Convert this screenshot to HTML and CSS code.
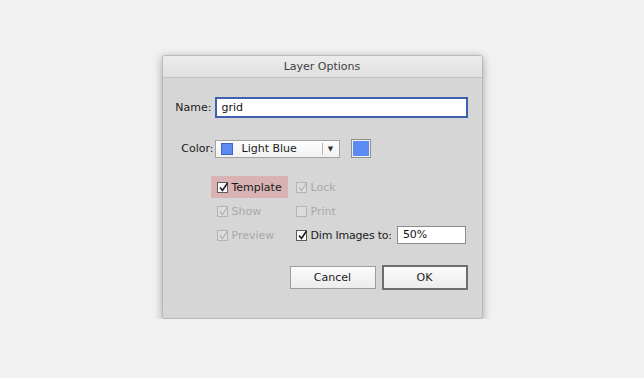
FILE: index.html
```html
<!DOCTYPE html>
<html lang="en">
<head>
    <meta charset="UTF-8">
    <title>Layer Options</title>
    <link rel="stylesheet" href="styles.css">
</head>
<body>
    <div class="dialog">
        <div class="titlebar">Layer Options</div>
        <div class="content">
            <div class="field">
                <span class="label">Name:</span>
                <div class="text-input name-input">grid</div>
            </div>

            <div class="field color-row">
                <span class="label">Color:</span>
                <div class="select">
                    <span class="chip"></span>
                    <span class="select-text">Light Blue</span>
                    <span class="select-arrow">&#9660;</span>
                </div>
                <span class="swatch-btn"><span class="swatch"></span></span>
            </div>

            <div class="options">
                <div class="opt">
                    <span class="opt-inner highlight"><span class="box"><svg viewBox="0 0 11 11"><path d="M2 5.5 L4.5 8.5 L9.5 1"/></svg></span>Template</span>
                </div>
                <div class="opt disabled">
                    <span class="opt-inner"><span class="box"><svg viewBox="0 0 11 11"><path d="M2 5.5 L4.5 8.5 L9.5 1"/></svg></span>Lock</span>
                </div>
                <div class="opt disabled">
                    <span class="opt-inner"><span class="box"><svg viewBox="0 0 11 11"><path d="M2 5.5 L4.5 8.5 L9.5 1"/></svg></span>Show</span>
                </div>
                <div class="opt disabled">
                    <span class="opt-inner"><span class="box"></span>Print</span>
                </div>
                <div class="opt disabled">
                    <span class="opt-inner"><span class="box"><svg viewBox="0 0 11 11"><path d="M2 5.5 L4.5 8.5 L9.5 1"/></svg></span>Preview</span>
                </div>
                <div class="opt">
                    <span class="opt-inner dim-label"><span class="box"><svg viewBox="0 0 11 11"><path d="M2 5.5 L4.5 8.5 L9.5 1"/></svg></span>Dim Images to:</span>
                    <div class="text-input dim-input">50%</div>
                </div>
            </div>

            <div class="buttons">
                <div class="btn">Cancel</div>
                <div class="btn btn-default">OK</div>
            </div>
        </div>
    </div>
</body>
</html>
```

FILE: styles.css
```css
body {
    margin: 0;
    padding: 0;
    background: #f1f1f1;
    font-family: 'DejaVu Sans', sans-serif;
    font-size: 11px;
    color: #1a1a1a;
}

.dialog {
    width: 321px;
    height: 264px;
    margin: 55px auto 0;
    background: #d6d6d6;
    border: 1px solid #bababa;
    box-sizing: border-box;
    border-radius: 3px;
    box-shadow: 0 2px 9px rgba(0, 0, 0, 0.32);
    overflow: hidden;
}

.titlebar {
    height: 21px;
    line-height: 21px;
    text-align: center;
    color: #3f3f3f;
    background: linear-gradient(#ececec, #e0e0e0);
    border-bottom: 1px solid #c2c2c2;
}

.content {
    padding: 19px 14px 0 0;
}

.field {
    display: flex;
    align-items: center;
    height: 21px;
}

.label {
    width: 49px;
    text-align: right;
    margin-right: 3px;
}

.text-input {
    background: #fff;
    border: 1px solid #9a9a9a;
    box-sizing: border-box;
    padding-left: 5px;
    color: #111;
}

.name-input {
    width: 253px;
    height: 21px;
    line-height: 17px;
    border: 2px solid #3d5fae;
}

.color-row {
    margin-top: 21px;
    height: 19px;
}

.color-row .label {
    width: 51px;
    margin-right: 1px;
}

.select {
    width: 125px;
    height: 18px;
    display: flex;
    align-items: center;
    background: linear-gradient(#fdfdfd, #f2f2f2);
    border: 1px solid #a3a3a3;
    box-sizing: border-box;
}

.chip {
    width: 12px;
    height: 12px;
    margin-left: 5px;
    background: #5b8af2;
    border: 1px solid #3f66c2;
    box-sizing: border-box;
}

.select-text {
    margin-left: 9px;
    flex: 1;
}

.select-arrow {
    width: 16px;
    height: 12px;
    border-left: 1px solid #b4b4b4;
    font-size: 7px;
    line-height: 12px;
    text-align: center;
    color: #333;
}

.swatch-btn {
    margin-left: 11px;
    width: 20px;
    height: 19px;
    box-sizing: border-box;
    border: 1px solid #8f8f8f;
    background: #efefef;
    padding: 1px;
}

.swatch {
    display: block;
    width: 100%;
    height: 100%;
    background: #5b8af2;
}

.options {
    margin-top: 17px;
    margin-left: 48px;
    display: grid;
    grid-template-columns: 85px auto;
    grid-auto-rows: 24px;
    white-space: nowrap;
}

.opt {
    display: flex;
    align-items: center;
}

.opt-inner {
    display: flex;
    align-items: center;
    height: 22px;
    padding: 0 6px;
}

.opt:nth-child(2n) .opt-inner {
    padding-left: 0;
}

.dim-label {
    padding-right: 5px;
    letter-spacing: -0.2px;
}

.highlight {
    background: #d9b3b3;
    padding-right: 6px;
}

.box {
    width: 11px;
    height: 11px;
    margin-right: 4px;
    box-sizing: border-box;
    border: 1px solid #5a5a5a;
    background: #fbfbfb;
    position: relative;
    flex-shrink: 0;
}

.box svg {
    position: absolute;
    left: 0;
    top: -1px;
    width: 11px;
    height: 11px;
    fill: none;
    stroke: #1e1e1e;
    stroke-width: 1.6;
}

.disabled {
    color: #a9a9a9;
}

.disabled .box {
    border-color: #b3b3b3;
    background: #dcdcdc;
}

.disabled .box svg {
    stroke: #b0b0b0;
    stroke-width: 1.2;
}

.dim-input {
    width: 69px;
    height: 18px;
    line-height: 16px;
    border-color: #8c8c8c;
}

.buttons {
    margin-top: 18px;
    display: flex;
    justify-content: flex-end;
    align-items: center;
    gap: 6px;
}

.btn {
    width: 86px;
    height: 23px;
    line-height: 21px;
    box-sizing: border-box;
    text-align: center;
    background: linear-gradient(#fbfbfb, #ececec);
    border: 1px solid #9d9d9d;
}

.btn-default {
    height: 25px;
    line-height: 21px;
    border: 2px solid #6e6e6e;
}
```
